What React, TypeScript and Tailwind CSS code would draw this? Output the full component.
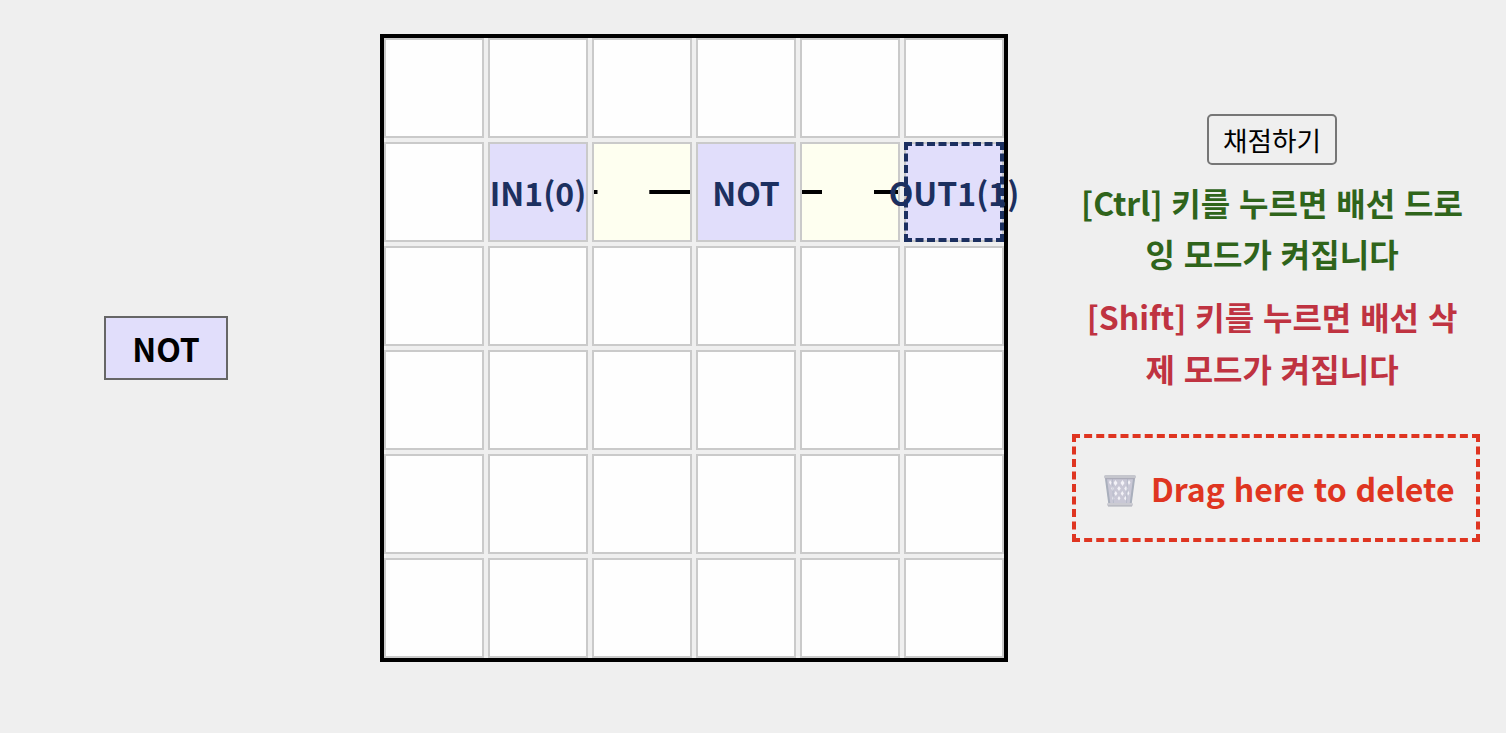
const COLS = 6;
const ROWS = 6;

type CellContent =
  | { kind: "gate"; label: string; selected?: boolean }
  | { kind: "wire"; dashes: [number, number][] };

const CONTENT: Record<string, CellContent> = {
  "1-1": { kind: "gate", label: "IN1(0)" },
  "1-2": { kind: "wire", dashes: [[0, 3.5], [55.3, 96]] },
  "1-3": { kind: "gate", label: "NOT" },
  "1-4": { kind: "wire", dashes: [[0, 20], [72, 96]] },
  "1-5": { kind: "gate", label: "OUT1(1)", selected: true },
};

function Cell({ content }: { content?: CellContent }) {
  if (!content) {
    return <div className="size-[100px] border-2 border-[#cacaca] bg-[#fefefe]" />;
  }
  if (content.kind === "wire") {
    return (
      <div className="size-[100px] border-2 border-[#cacaca] bg-[#fefff0]">
        <svg className="block size-24" viewBox="0 0 96 96">
          {content.dashes.map(([from, to]) => (
            <rect key={from} x={from} y={46} width={to - from} height={4} fill="#000" />
          ))}
        </svg>
      </div>
    );
  }
  const outline = content.selected
    ? "outline-4 -outline-offset-4 outline-dashed outline-[#1c3060]"
    : "";
  return (
    <div
      className={`flex size-[100px] items-center justify-center border-2 border-[#cacaca] bg-[#e1defb] font-semibold text-[#1c3060] ${outline}`}
    >
      <span className="relative whitespace-nowrap leading-[51px]">{content.label}</span>
    </div>
  );
}

function TrashIcon() {
  return (
    <svg className="mt-[7px] mr-[14px] h-[32px] w-[34px] shrink-0" viewBox="0 0 34 32">
      <path d="M2.5 3h29L28 30H6z" fill="#c9c8d6" />
      <g fill="#f3f2f7">
        <path d="M7 5l1.500 2.500L7.500 10 6 7.500zM12.500 5l2 3-2 3-2-3zM19.500 5l2 3-2 3-2-3zM26 5l1.500 2.500L26 10l-1.300-2.500z" />
        <path d="M9.500 11l1.600 2.500-1.400 2.500L8.200 13.500zM16 11l1.800 2.500-1.800 2.500-1.800-2.500zM23 11l1.800 2.500-1.800 2.500-1.800-2.500z" />
        <path d="M12.800 16l1.600 2.500-1.600 2.500-1.600-2.500zM19.300 16l1.600 2.500-1.600 2.500-1.600-2.500zM25.300 16l1.200 2.300-1.500 2.500-1.200-2.300z" />
        <path d="M10 21l1.400 2.200-1.200 2.300-1.200-2.300zM16 21l1.500 2.300-1.500 2.300-1.500-2.300zM22.500 21l1.400 2.300-1.600 2.300-1.300-2.300z" />
      </g>
      <path d="M3 4l3.500 26M31 4l-3.500 26" stroke="#a9afbc" strokeWidth="2" fill="none" />
      <path d="M9.500 4l1 25M24.500 4l-1 25" stroke="#b3b7c6" strokeWidth="0.800" fill="none" />
      <rect x="1" y="0" width="32" height="3.500" rx="1.500" fill="#c5c6cd" />
      <path d="M2 3.700h30" stroke="#a5a6b3" strokeWidth="1" />
      <rect x="4" y="28" width="26" height="3" rx="1.200" fill="#cbcbd2" />
      <path d="M5 31h24" stroke="#a9abb5" strokeWidth="1" />
    </svg>
  );
}

export default function App() {
  return (
    <div className="flex h-[733px] w-[1506px] items-start overflow-hidden bg-[#efefef] font-['Noto_Sans_CJK_KR','Noto_Sans',sans-serif] text-[32px]">
      <aside className="flex w-[380px] shrink-0 pt-[316px] pl-[104px]">
        <div className="flex h-16 w-[124px] items-center justify-center border-2 border-[#666666] bg-[#e1defb] font-semibold text-black">
          <span className="leading-[51px]">NOT</span>
        </div>
      </aside>

      <main className="shrink-0 pt-[34px]">
        <div className="grid w-[628px] grid-cols-6 gap-1 border-4 border-black">
          {Array.from({ length: ROWS * COLS }, (_, i) => {
            const key = `${Math.floor(i / COLS)}-${i % COLS}`;
            return <Cell key={key} content={CONTENT[key]} />;
          })}
        </div>
      </main>

      <section className="ml-16 flex w-[400px] shrink-0 flex-col items-center pt-[114px] [word-spacing:1.6px]">
        <button className="flex h-[51px] w-[130px] items-center justify-center rounded-[5px] border-2 border-[#767676] bg-[#efefef] text-[26.67px] text-black">
          채점하기
        </button>
        <p className="mt-[12px] w-[392px] text-center font-semibold break-all leading-[51.2px] text-[#2f641b]">
          [Ctrl] 키를 누르면 배선 드로잉 모드가 켜집니다
        </p>
        <p className="mt-3 w-[392px] text-center font-semibold break-all leading-[51.2px] text-[#bf3341]">
          [Shift] 키를 누르면 배선 삭제 모드가 켜집니다
        </p>
        <div className="mt-[40px] flex h-[108px] w-[408px] shrink-0 items-center self-start border-4 border-dashed border-[#df3521] pl-[27px] font-semibold text-[#df3521]">
          <TrashIcon />
          <span className="mt-[1px] whitespace-nowrap leading-[51px]">Drag here to delete</span>
        </div>
      </section>
    </div>
  );
}
